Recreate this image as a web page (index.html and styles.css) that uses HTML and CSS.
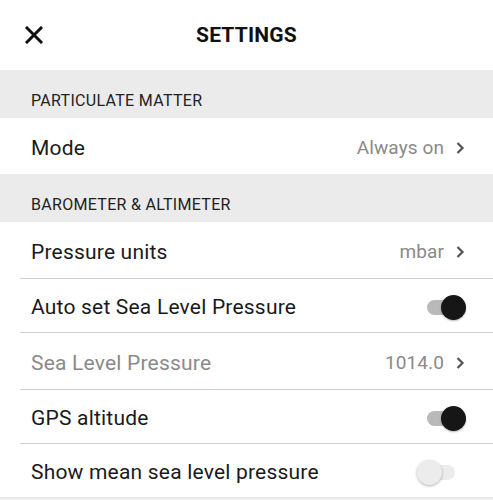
FILE: index.html
```html
<!DOCTYPE html>
<html>
<head>
<meta charset="utf-8">
<link rel="stylesheet" href="styles.css">
</head>
<body>
<div class="app">
  <header class="topbar">
    <svg class="close" width="18" height="18" viewBox="0 0 18 18"><path d="M2 2L16 16M16 2L2 16" stroke="#111" stroke-width="3" stroke-linecap="square"/></svg>
    <h1 class="title">SETTINGS</h1>
  </header>

  <div class="section">PARTICULATE MATTER</div>
  <div class="row tall">
    <span class="label">Mode</span>
    <span class="value">Always on</span>
    <svg class="chev" width="10" height="14" viewBox="0 0 10 14"><path d="M2.5 2L7.5 7L2.5 12" fill="none" stroke="#555" stroke-width="2.2"/></svg>
  </div>

  <div class="section">BAROMETER &amp; ALTIMETER</div>
  <div class="row tall divided">
    <span class="label">Pressure units</span>
    <span class="value">mbar</span>
    <svg class="chev" width="10" height="14" viewBox="0 0 10 14"><path d="M2.5 2L7.5 7L2.5 12" fill="none" stroke="#555" stroke-width="2.2"/></svg>
  </div>
  <div class="row divided">
    <span class="label">Auto set Sea Level Pressure</span>
    <span class="toggle on"><span class="knob"></span></span>
  </div>
  <div class="row tall divided">
    <span class="label disabled">Sea Level Pressure</span>
    <span class="value">1014.0</span>
    <svg class="chev" width="10" height="14" viewBox="0 0 10 14"><path d="M2.5 2L7.5 7L2.5 12" fill="none" stroke="#555" stroke-width="2.2"/></svg>
  </div>
  <div class="row divided">
    <span class="label">GPS altitude</span>
    <span class="toggle on"><span class="knob"></span></span>
  </div>
  <div class="row">
    <span class="label">Show mean sea level pressure</span>
    <span class="toggle off"><span class="knob"></span></span>
  </div>
  <div class="footer"></div>
</div>
</body>
</html>
```
FILE: styles.css
```css
html, body {
  margin: 0;
  padding: 0;
  background: #fff;
}
.app {
  font-family: Roboto, "Liberation Sans", sans-serif;
  width: 493px;
}
.topbar {
  height: 70px;
  display: flex;
  align-items: center;
  justify-content: center;
  position: relative;
}
.close {
  position: absolute;
  left: 25px;
  top: 26px;
}
.title {
  margin: 0;
  font-size: 21px;
  font-weight: 700;
  color: #111;
  letter-spacing: 0.2px;
}
.section {
  background: #ebebeb;
  height: 48px;
  padding-left: 31px;
  display: flex;
  align-items: center;
  padding-top: 13px;
  box-sizing: border-box;
  font-size: 16px;
  letter-spacing: 0.3px;
  color: #222;
}
.footer {
  background: #ebebeb;
  height: 3px;
}
.row {
  position: relative;
  height: 53px;
  box-sizing: border-box;
  display: flex;
  align-items: center;
  padding: 3px 28px 0 31px;
}
.row.tall {
  height: 56px;
}
.row.divided {
  border-bottom: 1px solid #cfcfd3;
  margin-left: 20px;
  padding-left: 11px;
  height: 54px;
}
.row.tall.divided {
  height: 57px;
}
.label {
  flex: 1;
  font-size: 21px;
  letter-spacing: 0.2px;
  color: #1a1a1a;
}
.label.disabled {
  color: #8a8a8a;
}
.value {
  font-size: 19px;
  letter-spacing: 0.1px;
  color: #8a8a8a;
  margin-right: 11px;
}
.chev {
  display: block;
}
.toggle {
  position: relative;
  width: 38px;
  height: 15px;
  border-radius: 8px;
}
.toggle.on {
  background: #b9b9b9;
}
.toggle.off {
  background: #ececec;
  margin-right: 10px;
}
.knob {
  position: absolute;
  top: -5px;
  width: 25px;
  height: 25px;
  border-radius: 50%;
}
.toggle.on .knob {
  right: -1px;
  background: #161616;
  box-shadow: 0 1px 2px rgba(0,0,0,0.3);
}
.toggle.off .knob {
  left: 0;
  background: #ececec;
  box-shadow: 0 1px 3px rgba(0,0,0,0.3);
}
```
